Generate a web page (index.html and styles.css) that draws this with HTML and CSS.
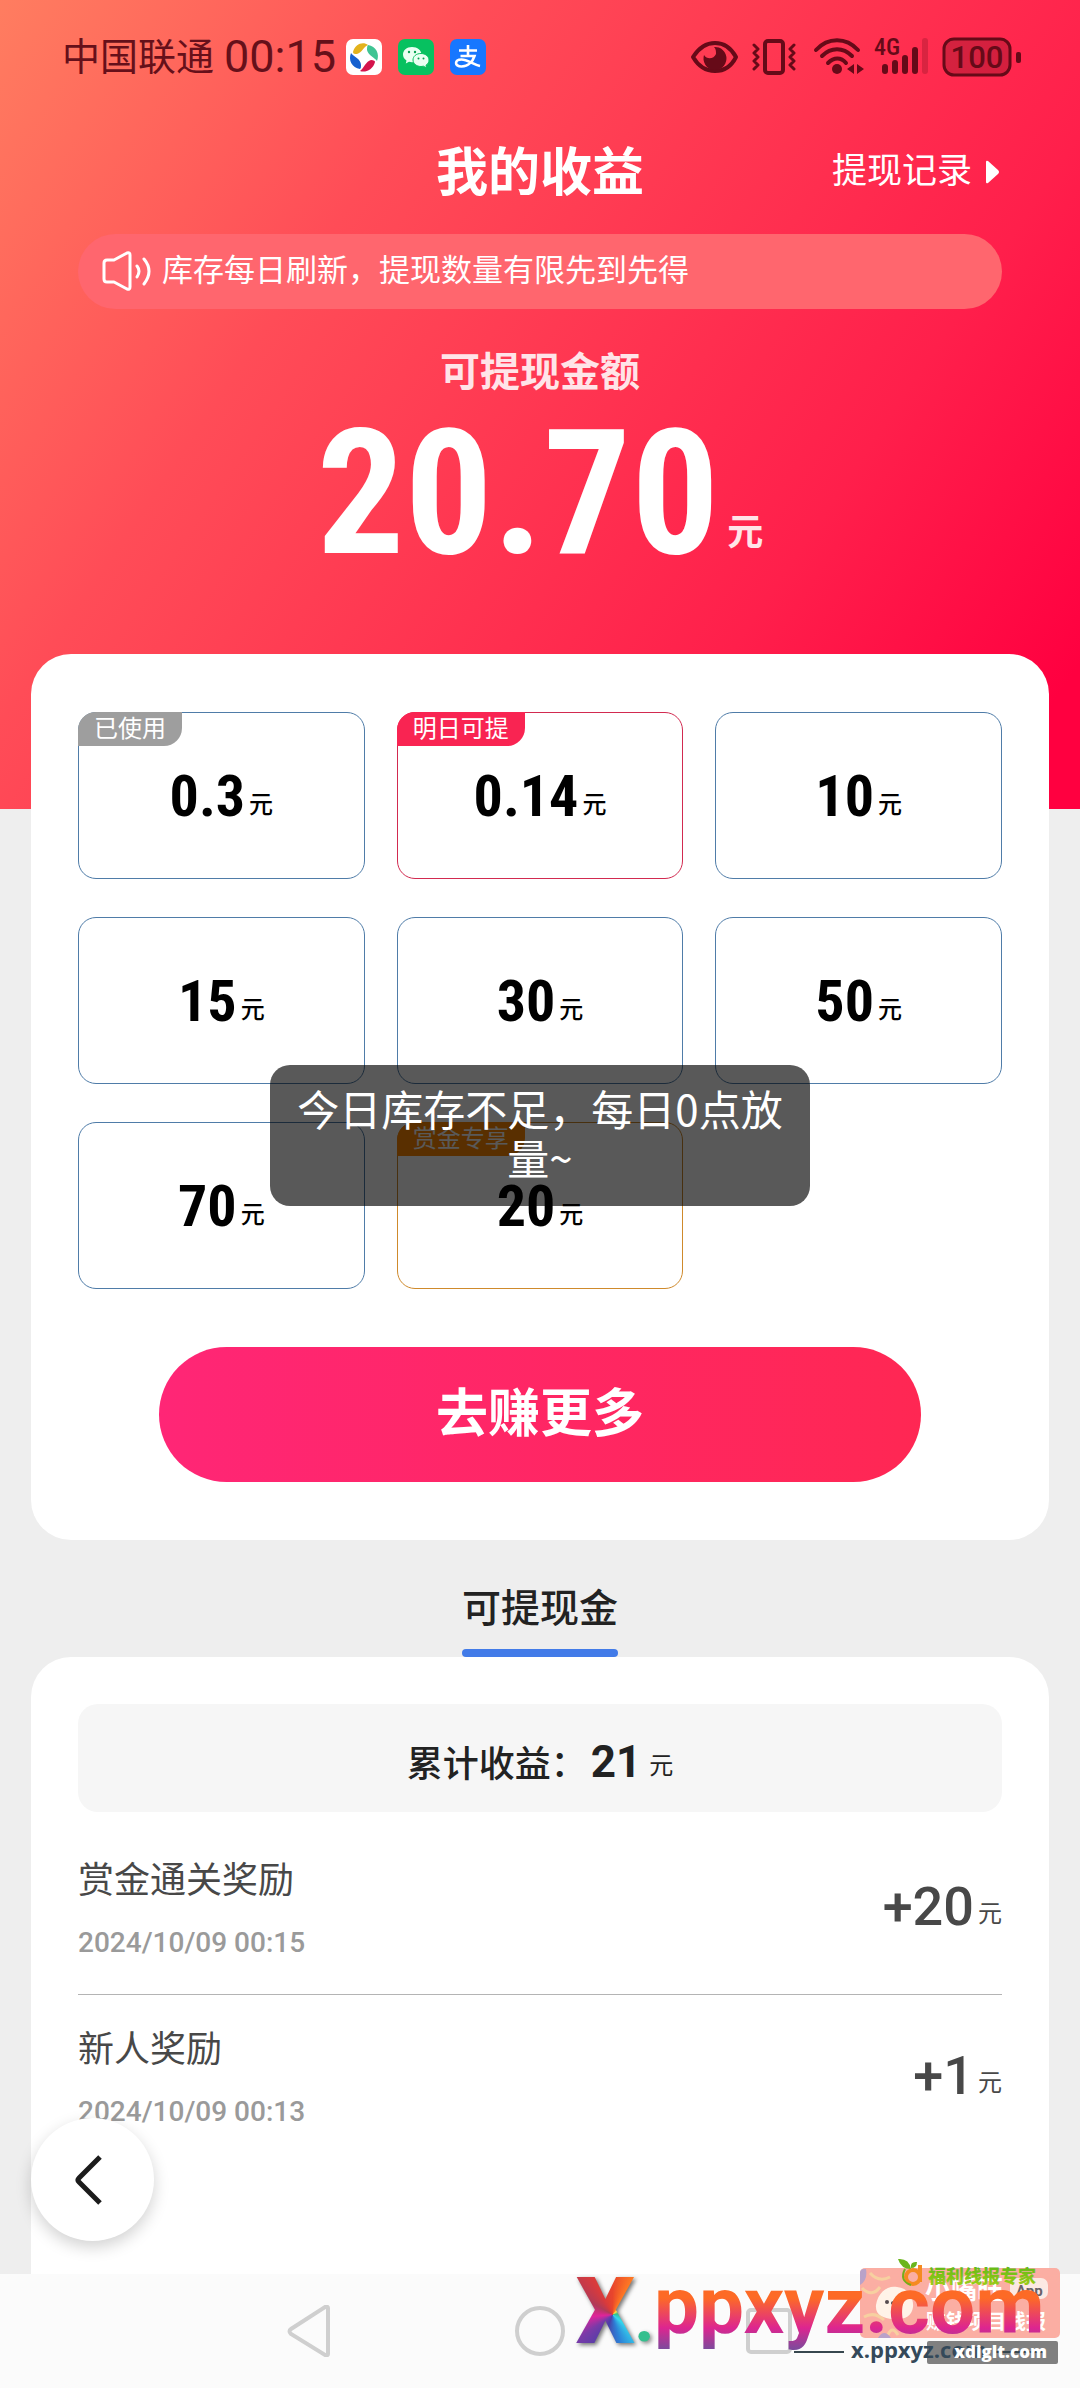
FILE: index.html
```html
<!DOCTYPE html>
<html lang="zh-CN">
<head>
<meta charset="utf-8">
<meta name="viewport" content="width=device-width, initial-scale=1">
<title>我的收益</title>
<link rel="stylesheet" href="styles.css">
</head>
<body>
<div class="page">
  <header class="hero">
    <div class="status">
      <div class="status-side">
        <span class="carrier">中国联通</span>
        <span class="clock">00:15</span>
        <span class="app-icons">
          <svg viewBox="0 0 36 36" width="36" height="36" aria-hidden="true">
            <rect width="36" height="36" rx="7" fill="#fff"/>
            <path d="M7 13C9 5 17 2 22 6C18 7 16 14 11 15C9 15 7 15 7 13Z" fill="#e3b21c"/>
            <path d="M22 6C30 7 34 15 31 22C29 19 22 16 21 11C21 9 21 7 22 6Z" fill="#3fc493"/>
            <path d="M29 23C27 31 19 34 14 32C18 29 20 22 25 21C28 21 29 22 29 23Z" fill="#d4144c"/>
            <path d="M14 30C6 29 2 21 5 14C8 18 15 20 15 26C15 28 15 29 14 30Z" fill="#1660cf"/>
          </svg>
          <svg viewBox="0 0 36 36" width="36" height="36" aria-hidden="true">
            <rect width="36" height="36" rx="7" fill="#07c160"/>
            <path d="M14 8C8.500 8 5 11.500 5 15.500C5 18 6.300 20 8.500 21.500L7.800 24.500L11 22.800C12 23.100 13 23.200 14 23.200C20 23.200 23.500 19.500 23.500 15.500C23.500 11.500 19.500 8 14 8Z" fill="#e9fff2"/>
            <path d="M23 14.500C18 14.500 15 17.500 15 21C15 24.500 18.500 27.500 23 27.500L25.500 27.200L28.500 29L28 26.200C30 25 31 23.200 31 21C31 17.500 27.500 14.500 23 14.500Z" fill="#e9fff2" stroke="#07c160"/>
            <circle cx="11" cy="13" r="1.200" fill="#07a050"/><circle cx="17" cy="13" r="1.200" fill="#07a050"/>
            <circle cx="20.500" cy="19.500" r="1" fill="#07a050"/><circle cx="25.500" cy="19.500" r="1" fill="#07a050"/>
          </svg>
          <svg viewBox="0 0 36 36" width="36" height="36" aria-hidden="true">
            <rect width="36" height="36" rx="7" fill="#1777ff"/>
            <path d="M9 11.500H27M18 6V17M10.500 17H24.500C23 21.500 19 27.500 11.500 27.500C4 27.500 4.500 20.500 11.500 20.500C17.500 20.500 23 25.500 30 27" fill="none" stroke="#fff" stroke-width="2.600"/>
          </svg>
        </span>
      </div>
      <svg class="status-icons" viewBox="0 0 332 40" width="332" height="40" role="img" aria-label="护眼 振动 WLAN 4G 电量 100">
        <g fill="none" stroke="currentColor" stroke-width="4" stroke-linecap="round" stroke-linejoin="round">
          <path d="M3 20C10 9 18 6 25 6S40 9 46 20C40 32 32 34 25 34S10 32 3 20Z"/>
          <path d="M64 8l4 4l-4 4l4 4l-4 4l4 4l-4 4M104 8l-4 4l4 4l-4 4l4 4l-4 4l4 4" stroke-width="3"/>
          <rect x="75" y="4" width="18" height="32" rx="3"/>
          <path d="M126 13C138 0 156 0 168 13M132 19C141 10 153 10 162 19M138 26C144 20 151 20 156 26"/>
        </g>
        <g fill="currentColor">
          <path d="M24 10A11.500 11.500 0 1 1 14 18C17 23 24 22 26 17C26 14 26 12 24 10Z"/>
          <circle cx="147" cy="32" r="5"/>
          <path d="M164 27V37L157 32ZM167 27V37L174 32Z"/>
          <rect x="192" y="27" width="6" height="10" rx="3"/>
          <rect x="202" y="23" width="6" height="14" rx="3"/>
          <rect x="212" y="18" width="6" height="19" rx="3"/>
          <rect x="222" y="10" width="6" height="27" rx="3"/>
          <rect x="232" y="1" width="6" height="36" rx="3" opacity=".25"/>
          <text class="narrow" x="184" y="18" font-size="24" font-weight="500">4G</text>
          <rect x="254" y="2" width="66" height="36" rx="10" fill-opacity=".28" stroke="currentColor" stroke-width="3"/>
          <text x="287" y="31" font-size="31" font-weight="500" text-anchor="middle">100</text>
          <rect x="326" y="15" width="5" height="11" rx="2"/>
        </g>
      </svg>
    </div>

    <div class="titlebar">
      <h1>我的收益</h1>
      <a class="history" href="#history">提现记录
        <svg viewBox="0 0 16 26" width="16" height="26" aria-hidden="true"><path d="M2 3V23Q2 25 4 24L14 15Q16 13 14 11L4 2Q2 1 2 3Z" fill="#fff"/></svg>
      </a>
    </div>

    <p class="notice">
      <svg viewBox="0 0 50 40" width="50" height="40" fill="none" stroke="#fff" stroke-width="3" stroke-linecap="round" stroke-linejoin="round" aria-hidden="true">
        <path d="M2 12Q2 9 5 9H12L25 2Q28 1 28 4V36Q28 39 25 38L12 31H5Q2 31 2 28Z"/>
        <path d="M35 15Q39 20 35 26M42 8Q52 20 42 33"/>
      </svg>
      库存每日刷新，提现数量有限先到先得
    </p>

    <p class="balance-label">可提现金额</p>
    <p class="balance"><strong class="narrow">20.70</strong><span class="unit">元</span></p>
  </header>

  <main class="content">
    <section class="card withdraw">
      <div class="amounts">
        <button type="button" class="amount"><em class="tag tag-used">已使用</em><b class="narrow">0.3</b><span class="unit">元</span></button>
        <button type="button" class="amount amount-next"><em class="tag tag-next">明日可提</em><b class="narrow">0.14</b><span class="unit">元</span></button>
        <button type="button" class="amount"><b class="narrow">10</b><span class="unit">元</span></button>
        <button type="button" class="amount"><b class="narrow">15</b><span class="unit">元</span></button>
        <button type="button" class="amount"><b class="narrow">30</b><span class="unit">元</span></button>
        <button type="button" class="amount"><b class="narrow">50</b><span class="unit">元</span></button>
        <button type="button" class="amount"><b class="narrow">70</b><span class="unit">元</span></button>
        <button type="button" class="amount amount-bonus"><em class="tag tag-bonus">赏金专享</em><b class="narrow">20</b><span class="unit">元</span></button>
      </div>
      <button type="button" class="earn">去赚更多</button>
      <div class="toast" role="status">今日库存不足，每日0点放量~</div>
    </section>

    <div class="tabs"><button type="button" class="tab">可提现金</button></div>

    <section class="card records">
      <p class="total">累计收益：<b>21</b><span class="unit">元</span></p>
      <ul>
        <li>
          <div class="record-info"><h2>赏金通关奖励</h2><time datetime="2024-10-09T00:15">2024/10/09 00:15</time></div>
          <p class="gain"><b>+20</b><span class="unit">元</span></p>
        </li>
        <li>
          <div class="record-info"><h2>新人奖励</h2><time datetime="2024-10-09T00:13">2024/10/09 00:13</time></div>
          <p class="gain"><b>+1</b><span class="unit">元</span></p>
        </li>
      </ul>
    </section>
    <button type="button" class="back" aria-label="返回">
      <svg viewBox="0 0 32 52" width="32" height="52" aria-hidden="true"><path d="M26 3L5 24Q3 26 5 28L26 49" fill="none" stroke="#1c1c1c" stroke-width="5"/></svg>
    </button>
  </main>

  <nav class="sysnav">
    <button type="button" aria-label="后退"><svg viewBox="0 0 52 52" width="52" height="52"><path d="M43 3V49Q43 51 40 50L6 29Q3 26 6 24L40 2Q43 1 43 3Z"/></svg></button>
    <button type="button" aria-label="主屏幕"><svg viewBox="0 0 52 52" width="52" height="52"><circle cx="26" cy="26" r="23"/></svg></button>
    <button type="button" aria-label="最近任务"><svg viewBox="0 0 52 52" width="52" height="52"><rect x="5" y="5" width="42" height="42" rx="3"/></svg></button>
  </nav>

  <div class="mark">
    <svg viewBox="0 0 510 130" width="510" height="130" role="img" aria-label="x.ppxyz.com">
      <defs>
        <linearGradient id="warm" gradientUnits="userSpaceOnUse" x1="0" y1="34" x2="0" y2="94">
          <stop offset=".15" stop-color="#fd6a26"/><stop offset=".65" stop-color="#dd2590"/><stop offset="1" stop-color="#7d4a9c"/>
        </linearGradient>
        <linearGradient id="leaf" x1="0" y1="0" x2="0" y2="1">
          <stop offset="0" stop-color="#55b516"/><stop offset="1" stop-color="#a5cf18"/>
        </linearGradient>
      </defs>
      <rect x="290" y="13" width="200" height="70" rx="5" fill="#fbab9f" fill-opacity=".96"/>
      <path d="M292 33Q302 43 310 32M300 18Q309 28 320 22M294 62Q304 56 314 65M318 80Q322 70 328 80" fill="none" stroke="#f7d0a0" stroke-width="3"/>
      <path d="M290 18V30Q298 25 296 14H294Q290 14 290 18ZM308 83Q314 73 321 83Z" fill="#b9a2c9"/>
      <path d="M306 50C308 37 318 30 327 32C339 33 344 44 343 52C342 62 333 65 323 64C313 63 305 60 306 50Z" fill="#fff3e8"/>
      <circle cx="317" cy="47" r="2" fill="#554c50"/><ellipse cx="324" cy="48" rx="3" ry="2" fill="#554c50"/>
      <rect x="440" y="23" width="38" height="21" rx="7" fill="#fce9e3"/>
      <g class="cjk" fill="#fff" font-weight="700">
        <text x="355" y="44" font-size="26">小嘴旺</text>
        <text x="356" y="74" font-size="20">赚钱项目线报</text>
      </g>
      <text x="446" y="41" font-size="15" font-weight="700" fill="#686268">App</text>
      <text x="84" y="78" font-size="80" font-weight="700" fill="url(#warm)">ppxyz.com</text>
      <g>
        <circle cx="343" cy="22" r="7" fill="none" stroke="#f58a20" stroke-width="4"/>
        <path d="M350 10V27" stroke="#f58a20" stroke-width="4"/>
        <path d="M335 14Q329 26 341 30" fill="none" stroke="#74ad1b" stroke-width="2"/>
        <path d="M328 4Q339 3 341 14Q331 14 328 4ZM341 13Q340 6 347 7Q347 13 341 13Z" fill="#6bb51d"/>
        <text class="cjk" x="358" y="28" font-size="18" font-weight="900" fill="url(#leaf)">福利线报专家</text>
      </g>
      <rect x="357" y="86" width="131" height="23" rx="2" fill="#808080"/>
      <path d="M224 97H274M426 97H474" stroke="#37474f" stroke-width="2"/>
      <text class="site" x="281" y="103" font-size="22" font-weight="700" fill="#34495a">x.ppxyz.com</text>
      <text class="site" x="477" y="103" font-size="17" font-weight="800" fill="#fff" text-anchor="end">xdiglt.com</text>
    </svg>
    <span class="mark-x">X</span><span class="mark-dot">.</span>
  </div>
</div>
</body>
</html>
```
FILE: styles.css
```css
* { box-sizing: border-box; }

body {
  margin: 0;
  background: #eee;
  color: #222;
  font-family: Roboto, "Noto Sans CJK SC", sans-serif;
}

h1, h2, p, ul { margin: 0; padding: 0; font-weight: 400; }
ul { list-style: none; }

button {
  margin: 0;
  padding: 0;
  border: 0;
  background: none;
  color: inherit;
  font-family: inherit;
}

svg { display: block; flex: none; }

.narrow { font-family: "Roboto Condensed", Roboto, sans-serif; }

.page {
  position: relative;
  display: flex;
  flex-direction: column;
  min-height: 100vh;
}

/* Currency sign after a number */
.unit {
  margin-left: 4px;
  font-size: 24px;
  font-weight: 500;
  line-height: 1;
  vertical-align: 3px;
}

/* Header */
.hero {
  padding: 0 78px 240px;
  background: linear-gradient(124deg, #ff7d60 0%, #ff4c57 30%, #ff1f4b 72%, #ff0040 94%);
  color: #fff;
}

.status {
  display: flex;
  align-items: center;
  justify-content: space-between;
  height: 114px;
  margin: 0 -20px 0 -16px;
  color: #66101a;
}

.status-side { display: flex; align-items: center; gap: 10px; }
.carrier { font-size: 38px; line-height: 48px; }
.clock { font-size: 45px; line-height: 48px; }
.app-icons { display: flex; gap: 16px; }
.status-icons { color: #660a18; }

.titlebar {
  display: grid;
  grid-template-columns: 1fr auto 1fr;
  align-items: center;
  height: 120px;
}

.titlebar h1 {
  grid-column: 2;
  font-size: 52px;
  font-weight: 700;
  line-height: 60px;
}

.history {
  display: flex;
  align-items: center;
  justify-content: flex-end;
  gap: 12px;
  padding: 0 2px 4px 0;
  color: #fff;
  font-size: 35px;
  line-height: 40px;
  text-decoration: none;
}

.notice {
  display: flex;
  align-items: center;
  gap: 10px;
  height: 75px;
  padding: 0 24px 2px;
  border-radius: 38px;
  background: #ff666e;
  font-size: 31px;
  line-height: 40px;
}

.balance-label {
  margin-top: 40px;
  color: #ffe4e8;
  font-size: 40px;
  font-weight: 700;
  line-height: 48px;
  text-align: center;
}

.balance {
  height: 150px;
  margin-top: 22px;
  text-align: center;
  line-height: 150px;
}

.balance strong { font-size: 174px; font-weight: 700; }

.balance .unit {
  margin-left: 8px;
  color: #ffe4e8;
  font-size: 36px;
  font-weight: 700;
  vertical-align: 8px;
}

/* Cards */
.content {
  position: relative;
  display: flex;
  flex: 1;
  flex-direction: column;
  margin-top: -155px;
  padding: 0 31px;
}

.card { padding: 0 47px; background: #fff; }

.withdraw {
  position: relative;
  padding-top: 58px;
  padding-bottom: 58px;
  border-radius: 40px;
}

.amounts {
  display: grid;
  grid-template-columns: repeat(3, 1fr);
  gap: 38px 32px;
}

.amount {
  position: relative;
  height: 167px;
  padding-top: 12px;
  border: 1px solid #4f7ca8;
  border-radius: 18px;
  color: #000;
  font-size: 24px;
  line-height: 72px;
  text-align: center;
}

.amount b { font-size: 58px; font-weight: 700; }
.amount-next { border-color: #d22a50; }
.amount-bonus { border-color: #cf8a2c; }

.tag {
  position: absolute;
  top: -1px;
  left: -1px;
  padding: 0 16px;
  border-radius: 18px 0 18px 0;
  color: #fff;
  font-size: 24px;
  font-style: normal;
  font-weight: 400;
  line-height: 34px;
}

.tag-used { background: #9e9e9e; }
.tag-next { background: #f92452; }
.tag-bonus { background: #ff8600; }

.earn {
  display: block;
  width: calc(100% - 162px);
  height: 135px;
  margin: 58px auto 0;
  border-radius: 68px;
  background: linear-gradient(90deg, #ff2676, #ff2753);
  color: #fff;
  font-size: 52px;
  font-weight: 700;
  line-height: 60px;
}

.toast {
  position: absolute;
  top: 411px;
  left: 50%;
  width: 540px;
  margin-left: -270px;
  padding: 18px 20px 25px;
  border-radius: 20px;
  background: rgba(0, 0, 0, .65);
  color: #fff;
  font-family: "Noto Sans CJK SC", sans-serif;
  font-size: 42px;
  line-height: 49px;
  text-align: center;
}

.tabs { display: flex; justify-content: center; }

.tab {
  display: flex;
  flex-direction: column;
  justify-content: space-between;
  height: 117px;
  padding-top: 45px;
  color: #222;
  font-size: 39px;
  font-weight: 500;
  line-height: 48px;
}

.tab::after {
  align-self: stretch;
  height: 8px;
  border-radius: 4px;
  background: #427be8;
  content: "";
}

.records {
  flex: 1;
  padding-top: 47px;
  border-radius: 40px 40px 0 0;
}

.total {
  height: 108px;
  padding-top: 14px;
  border-radius: 20px;
  background: #f6f6f6;
  font-size: 36px;
  font-weight: 500;
  line-height: 94px;
  text-align: center;
}

.total b { margin-left: 4px; font-size: 44px; line-height: 1; }
.total .unit { margin-left: 8px; font-weight: 400; }

.records ul { margin-top: 14px; }

.records li {
  display: flex;
  align-items: center;
  justify-content: space-between;
  height: 168px;
  color: #484848;
}

.records li + li { height: 169px; border-top: 1px solid #b4b4b4; }
.record-info { display: flex; flex-direction: column; gap: 26px; }
.record-info h2 { font-size: 36px; line-height: 40px; }
.record-info time { color: #9a9a9a; font-size: 28px; font-weight: 500; line-height: 32px; }

.gain { padding-top: 6px; line-height: 60px; }
.gain b { font-size: 54px; font-weight: 500; }
.gain .unit { font-weight: 400; }

.back {
  position: absolute;
  bottom: 33px;
  left: 31px;
  display: flex;
  align-items: center;
  width: 123px;
  height: 123px;
  padding-left: 43px;
  border-radius: 50%;
  background: #fff;
  box-shadow: 0 6px 16px rgba(0, 0, 0, .18);
}

/* System navigation */
.sysnav {
  display: flex;
  justify-content: center;
  gap: 177px;
  height: 114px;
  background: #fbfbfb;
}

.sysnav svg { fill: none; stroke: #cfcfcf; stroke-width: 4; }

/* Site mark laid over the bottom corner */
.mark { position: absolute; right: 0; bottom: 3px; }
.cjk { font-family: "Noto Sans CJK SC", sans-serif; }
.site { font-family: "Open Sans", sans-serif; }

.mark-x {
  position: absolute;
  bottom: 28px;
  left: 6px;
  background: conic-gradient(from 0deg at 62% 53%, #e8452c 0deg, #ff7a22 30deg, #ffe04a 48deg, #2fc08a 80deg, #35d6ee 130deg, #2d7fd6 165deg, #4a3fa8 200deg, #7a3aa8 235deg, #e0249a 265deg, #b03a58 300deg, #d83a3c 330deg, #e8452c 360deg);
  background-clip: text;
  -webkit-background-clip: text;
  color: transparent;
  filter: drop-shadow(2px 2px 2px rgba(0, 0, 0, .55));
  font-size: 92px;
  font-weight: 900;
  line-height: 90px;
}

.mark-dot {
  position: absolute;
  bottom: 28px;
  left: 64px;
  color: #35bf8e;
  filter: drop-shadow(2px 2px 2px rgba(0, 0, 0, .45));
  font-size: 72px;
  font-weight: 700;
  line-height: 80px;
}
```
